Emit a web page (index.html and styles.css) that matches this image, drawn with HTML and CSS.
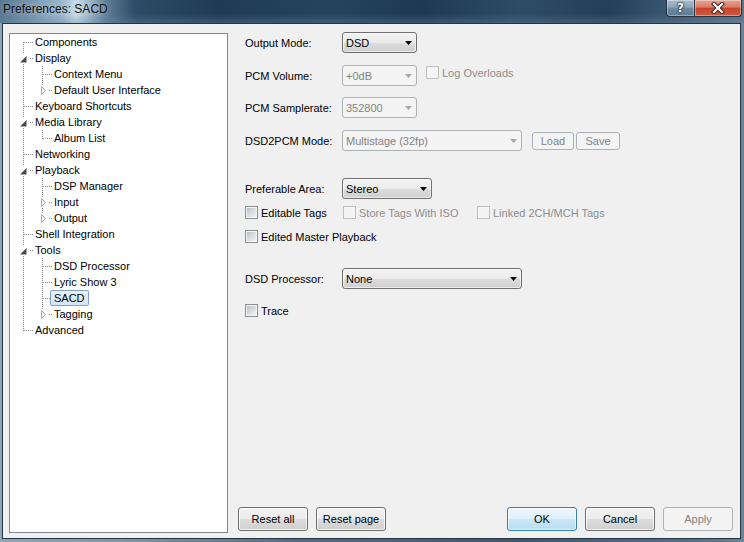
FILE: index.html
```html
<!DOCTYPE html>
<html>
<head>
<meta charset="utf-8">
<link rel="stylesheet" href="styles.css">
</head>
<body>
<div class="window">
  <div class="titlebar">
    <span class="title">Preferences: SACD</span>
    <div class="caption">
      <div class="cbtn help">?</div>
      <div class="cbtn close">
        <svg width="14" height="12" viewBox="0 0 14 12"><path d="M3 2 L11 10 M11 2 L3 10" stroke="#3a2420" stroke-width="4.2" stroke-linecap="square"/><path d="M3 2 L11 10 M11 2 L3 10" stroke="#fff" stroke-width="2.2" stroke-linecap="square"/></svg>
      </div>
    </div>
  </div>
  <div class="client">
    <div class="tree">
      <div class="row"><span class="c f"></span><span class="lbl">Components</span></div>
      <div class="row"><span class="c ta"><svg width="25" height="16"><rect x="9" y="4" width="9" height="10" fill="#fff"/><path d="M16.5 6 V12.5 H10 Z" fill="#4a4a4a"/></svg></span><span class="lbl">Display</span></div>
      <div class="row"><span class="g"></span><span class="c t"></span><span class="lbl">Context Menu</span></div>
      <div class="row"><span class="g"></span><span class="c la"><svg width="25" height="16"><rect x="10" y="3" width="9" height="11" fill="#fff"/><path d="M12.5 4.5 L16.5 8.5 L12.5 12.5 Z" fill="#fff" stroke="#a6a6a6"/></svg></span><span class="lbl">Default User Interface</span></div>
      <div class="row"><span class="c t"></span><span class="lbl">Keyboard Shortcuts</span></div>
      <div class="row"><span class="c ta"><svg width="25" height="16"><rect x="9" y="4" width="9" height="10" fill="#fff"/><path d="M16.5 6 V12.5 H10 Z" fill="#4a4a4a"/></svg></span><span class="lbl">Media Library</span></div>
      <div class="row"><span class="g"></span><span class="c l"></span><span class="lbl">Album List</span></div>
      <div class="row"><span class="c t"></span><span class="lbl">Networking</span></div>
      <div class="row"><span class="c ta"><svg width="25" height="16"><rect x="9" y="4" width="9" height="10" fill="#fff"/><path d="M16.5 6 V12.5 H10 Z" fill="#4a4a4a"/></svg></span><span class="lbl">Playback</span></div>
      <div class="row"><span class="g"></span><span class="c t"></span><span class="lbl">DSP Manager</span></div>
      <div class="row"><span class="g"></span><span class="c ta"><svg width="25" height="16"><rect x="10" y="3" width="9" height="11" fill="#fff"/><path d="M12.5 4.5 L16.5 8.5 L12.5 12.5 Z" fill="#fff" stroke="#a6a6a6"/></svg></span><span class="lbl">Input</span></div>
      <div class="row"><span class="g"></span><span class="c la"><svg width="25" height="16"><rect x="10" y="3" width="9" height="11" fill="#fff"/><path d="M12.5 4.5 L16.5 8.5 L12.5 12.5 Z" fill="#fff" stroke="#a6a6a6"/></svg></span><span class="lbl">Output</span></div>
      <div class="row"><span class="c t"></span><span class="lbl">Shell Integration</span></div>
      <div class="row"><span class="c ta"><svg width="25" height="16"><rect x="9" y="4" width="9" height="10" fill="#fff"/><path d="M16.5 6 V12.5 H10 Z" fill="#4a4a4a"/></svg></span><span class="lbl">Tools</span></div>
      <div class="row"><span class="g"></span><span class="c t"></span><span class="lbl">DSD Processor</span></div>
      <div class="row"><span class="g"></span><span class="c t"></span><span class="lbl">Lyric Show 3</span></div>
      <div class="row"><span class="g"></span><span class="c t"></span><span class="lbl sel">SACD</span></div>
      <div class="row"><span class="g"></span><span class="c la"><svg width="25" height="16"><rect x="10" y="3" width="9" height="11" fill="#fff"/><path d="M12.5 4.5 L16.5 8.5 L12.5 12.5 Z" fill="#fff" stroke="#a6a6a6"/></svg></span><span class="lbl">Tagging</span></div>
      <div class="row"><span class="c l"></span><span class="lbl">Advanced</span></div>
    </div>
    <div class="main">
      <div class="form">
        <div class="frow r1">
          <span class="label">Output Mode:</span>
          <div class="combo w75"><span>DSD</span><svg class="arr" width="7" height="4"><path d="M0 0 H7 L3.5 4 Z"/></svg></div>
        </div>
        <div class="frow r2">
          <span class="label">PCM Volume:</span>
          <div class="combo w75 dis"><span>+0dB</span><svg class="arr" width="7" height="4"><path d="M0 0 H7 L3.5 4 Z"/></svg></div>
          <div class="chk dis log"><span class="box"></span><span>Log Overloads</span></div>
        </div>
        <div class="frow r3">
          <span class="label">PCM Samplerate:</span>
          <div class="combo w75 dis"><span>352800</span><svg class="arr" width="7" height="4"><path d="M0 0 H7 L3.5 4 Z"/></svg></div>
        </div>
        <div class="frow r4">
          <span class="label">DSD2PCM Mode:</span>
          <div class="combo w180 dis"><span>Multistage (32fp)</span><svg class="arr" width="7" height="4"><path d="M0 0 H7 L3.5 4 Z"/></svg></div>
          <div class="btn dis load">Load</div>
          <div class="btn dis save">Save</div>
        </div>
        <div class="frow r5">
          <span class="label">Preferable Area:</span>
          <div class="combo w90"><span>Stereo</span><svg class="arr" width="7" height="4"><path d="M0 0 H7 L3.5 4 Z"/></svg></div>
        </div>
        <div class="frow r6">
          <div class="chk c1"><span class="box"></span><span>Editable Tags</span></div>
          <div class="chk dis c2"><span class="box"></span><span>Store Tags With ISO</span></div>
          <div class="chk dis"><span class="box"></span><span>Linked 2CH/MCH Tags</span></div>
        </div>
        <div class="frow r7">
          <div class="chk"><span class="box"></span><span>Edited Master Playback</span></div>
        </div>
        <div class="frow r8">
          <span class="label">DSD Processor:</span>
          <div class="combo w180"><span>None</span><svg class="arr" width="7" height="4"><path d="M0 0 H7 L3.5 4 Z"/></svg></div>
        </div>
        <div class="frow r9">
          <div class="chk"><span class="box"></span><span>Trace</span></div>
        </div>
      </div>
      <div class="buttons">
        <div class="btn">Reset all</div>
        <div class="btn">Reset page</div>
        <div class="spacer"></div>
        <div class="btn def">OK</div>
        <div class="btn">Cancel</div>
        <div class="btn dis">Apply</div>
      </div>
    </div>
  </div>
</div>
</body>
</html>
```

FILE: styles.css
```css
* { box-sizing: border-box; }
html, body { margin: 0; padding: 0; }
body {
  width: 744px;
  height: 542px;
  overflow: hidden;
  font-family: "Liberation Sans", Arial, sans-serif;
  font-size: 11px;
  color: #000;
  background: linear-gradient(to right, #8fa6b9 0px, #7f97ab 120px, #4f6b84 300px, #3c5973 520px, #51708a 700px, #6a8499 744px);
}
.window {
  width: 744px;
  height: 542px;
  display: flex;
  flex-direction: column;
}
.titlebar {
  height: 23px;
  flex: none;
  display: flex;
  align-items: flex-start;
  background:
    linear-gradient(to bottom, rgba(0,0,0,0) 0px, rgba(0,0,0,0) 14px, rgba(110,135,155,0.35) 23px),
    linear-gradient(to right, #56758f 0px, #7594ad 30px, #9ab7cd 62px, #c8dcea 76px, #a7c1d4 86px, #5f7f99 105px, #2e4c67 135px, #1f3b55 220px, #27445e 330px, #1d3953 420px, #2f4c66 520px, #243f58 610px, #3f5c76 680px, #5a768e 744px);
}
.title {
  padding-left: 3px;
  font-size: 12px;
  line-height: 19px;
  color: #111;
  text-shadow: 0 0 6px rgba(255,255,255,0.55);
}
.caption {
  margin-left: auto;
  margin-right: 2px;
  display: flex;
  height: 17px;
}
.cbtn {
  height: 17px;
  border: 1px solid #25323f;
  border-top: none;
  display: flex;
  align-items: center;
  justify-content: center;
  box-shadow: inset 0 0 0 1px rgba(255,255,255,0.35);
}
.help {
  width: 28px;
  border-right: none;
  border-bottom-left-radius: 4px;
  background: linear-gradient(to bottom, #a9bccc 0%, #8ea5b8 45%, #6f8aa1 50%, #5d7a92 100%);
  color: #fff;
  font-family: "DejaVu Sans", sans-serif;
  font-weight: bold;
  font-size: 12px;
  line-height: 16px;
  text-shadow: 0 0 1px #1c2833, 0 0 2px #1c2833, 0 0 2px #1c2833;
}
.close {
  width: 48px;
  border-bottom-right-radius: 4px;
  background: linear-gradient(to bottom, #e7a495 0%, #d97a66 45%, #c6432b 50%, #cf5a3f 100%);
}
.client {
  flex: 1;
  margin: 0 3px 3px 2px;
  border: 1px solid #27333f;
  background: #f0f0f0;
  display: flex;
}
.tree {
  margin: 9px 0 5px 6px;
  width: 219px;
  flex: none;
  border: 1px solid #828790;
  background: #fff;
}
.row {
  height: 16px;
  display: flex;
  align-items: center;
  white-space: nowrap;
}
.g, .c {
  flex: none;
  height: 16px;
  background-repeat: no-repeat;
}
.g {
  width: 19px;
  background-image: repeating-linear-gradient(to bottom, #8a8a8a 0 1px, transparent 1px 2px);
  background-position: 13px 0;
  background-size: 1px 16px;
}
.c { width: 25px; }
.c svg { display: block; }
.c.t {
  background-image:
    repeating-linear-gradient(to bottom, #8a8a8a 0 1px, transparent 1px 2px),
    repeating-linear-gradient(to right, #8a8a8a 0 1px, transparent 1px 2px);
  background-position: 13px 0, 14px 8px;
  background-size: 1px 16px, 10px 1px;
}
.c.l {
  background-image:
    repeating-linear-gradient(to bottom, #8a8a8a 0 1px, transparent 1px 2px),
    repeating-linear-gradient(to right, #8a8a8a 0 1px, transparent 1px 2px);
  background-position: 13px 0, 14px 8px;
  background-size: 1px 9px, 10px 1px;
}
.c.f {
  background-image:
    repeating-linear-gradient(to bottom, #8a8a8a 0 1px, transparent 1px 2px),
    repeating-linear-gradient(to right, #8a8a8a 0 1px, transparent 1px 2px);
  background-position: 13px 8px, 14px 8px;
  background-size: 1px 8px, 10px 1px;
}
.c.ta {
  background-image:
    repeating-linear-gradient(to bottom, #8a8a8a 0 1px, transparent 1px 2px),
    repeating-linear-gradient(to right, #8a8a8a 0 1px, transparent 1px 2px);
  background-position: 13px 0, 20px 8px;
  background-size: 1px 16px, 4px 1px;
}
.c.la {
  background-image:
    repeating-linear-gradient(to bottom, #8a8a8a 0 1px, transparent 1px 2px),
    repeating-linear-gradient(to right, #8a8a8a 0 1px, transparent 1px 2px);
  background-position: 13px 0, 20px 8px;
  background-size: 1px 4px, 4px 1px;
}
.lbl {
  margin-left: -4px;
  height: 16px;
  line-height: 14px;
  padding: 0 3px;
  border: 1px solid transparent;
  border-radius: 2px;
}
.lbl.sel {
  background: linear-gradient(to bottom, #e8f2fd, #d2e5fb);
  border-color: #7da2ce;
}
.main {
  flex: 1;
  display: flex;
  flex-direction: column;
}
.form {
  padding: 8px 0 0 17px;
}
.frow {
  display: flex;
  align-items: center;
  white-space: nowrap;
}
.frow.r1, .frow.r2, .frow.r3, .frow.r4, .frow.r5, .frow.r8 { height: 21px; }
.frow.r6, .frow.r7, .frow.r9 { height: 13px; }
.r2 { margin-top: 12px; }
.r3 { margin-top: 11px; }
.r4 { margin-top: 12px; }
.r5 { margin-top: 27px; }
.r6 { margin-top: 7px; }
.r7 { margin-top: 11px; }
.r8 { margin-top: 25px; }
.r9 { margin-top: 15px; }
.label {
  width: 97px;
  flex: none;
}
.combo {
  height: 21px;
  flex: none;
  display: flex;
  align-items: center;
  padding-left: 3px;
  border: 1px solid #707070;
  border-radius: 3px;
  background: linear-gradient(to bottom, #f2f2f2 0%, #ebebeb 50%, #dddddd 50%, #cfcfcf 100%);
  box-shadow: inset 0 0 0 1px rgba(255,255,255,0.6);
}
.combo .arr {
  margin-left: auto;
  margin-right: 4px;
  fill: #000;
  display: block;
}
.combo.dis {
  border-color: #adb2b5;
  background: #f4f4f4;
  box-shadow: none;
  color: #838383;
}
.combo.dis .arr { fill: #a7a7a7; }
.w75 { width: 75px; }
.w90 { width: 90px; }
.w180 { width: 180px; }
.chk {
  display: flex;
  align-items: center;
  height: 13px;
  flex: none;
}
.chk .box {
  width: 13px;
  height: 13px;
  margin-right: 3px;
  border: 1px solid #8e8f8f;
  background: linear-gradient(135deg, #b7bcc3 0%, #dfe2e5 60%, #f4f4f4 100%);
  box-shadow: inset 0 0 0 1px #f4f4f4;
}
.chk.dis { color: #8d8d8d; }
.chk.dis .box {
  border-color: #c0c0c0;
  background: #f4f4f4;
  box-shadow: none;
}
.log {
  margin-left: 9px;
  align-self: flex-start;
  margin-top: 1px;
}
.c1 { width: 98px; }
.c2 { width: 134px; }
.btn {
  width: 70px;
  height: 24px;
  flex: none;
  display: flex;
  align-items: center;
  justify-content: center;
  border: 1px solid #707070;
  border-radius: 3px;
  background: linear-gradient(to bottom, #f2f2f2 0%, #ebebeb 50%, #dddddd 50%, #cfcfcf 100%);
  box-shadow: inset 0 0 0 1px rgba(255,255,255,0.75);
}
.btn.def {
  border-color: #3c7fb1;
  background: linear-gradient(to bottom, #edf7fd 0%, #def0fb 50%, #c9e7f8 50%, #b8ddf3 100%);
  box-shadow: inset 0 0 0 1px rgba(255,255,255,0.6);
}
.btn.dis {
  border-color: #adb2b5;
  background: #f4f4f4;
  box-shadow: none;
  color: #838383;
}
.btn.load {
  width: 42px;
  height: 18px;
  margin-left: 10px;
}
.btn.save {
  width: 44px;
  height: 18px;
  margin-left: 2px;
}
.buttons {
  margin-top: auto;
  display: flex;
  gap: 8px;
  padding: 0 7px 7px 10px;
}
.spacer { flex: 1; }
```
